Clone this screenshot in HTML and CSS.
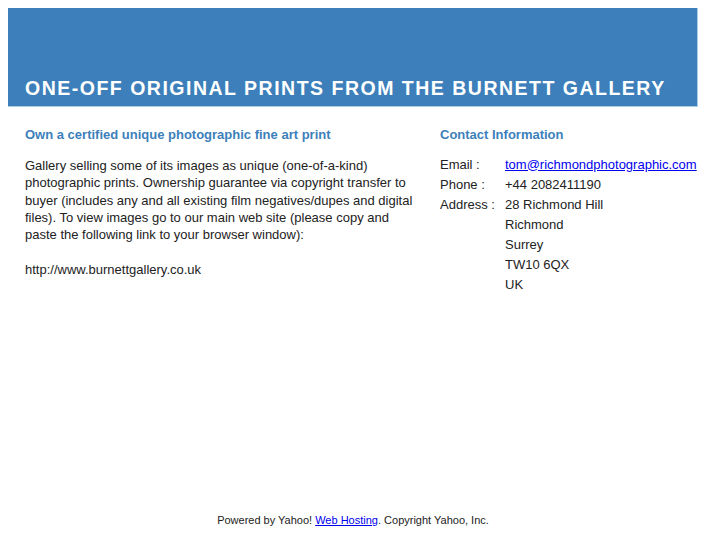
FILE: index.html
```html
<!DOCTYPE html>
<html>
<head>
<meta charset="utf-8">
<title>Burnett Gallery</title>
<link rel="stylesheet" href="styles.css">
</head>
<body>
<div class="page">
  <div class="header">
    <h1 class="title">ONE-OFF ORIGINAL PRINTS FROM THE BURNETT GALLERY</h1>
  </div>
  <div class="content">
    <div class="main">
      <h2 class="heading">Own a certified unique photographic fine art print</h2>
      <p class="text">Gallery selling some of its images as unique (one-of-a-kind) photographic prints. Ownership guarantee via copyright transfer to buyer (includes any and all existing film negatives/dupes and digital files). To view images go to our main web site (please copy and paste the following link to your browser window):<br><br>http://www.burnettgallery.co.uk</p>
    </div>
    <div class="side">
      <h2 class="heading side-heading">Contact Information</h2>
      <table class="contact">
        <tr><td class="label">Email :</td><td><a href="#" class="link">tom@richmondphotographic.com</a></td></tr>
        <tr><td class="label">Phone :</td><td>+44 2082411190</td></tr>
        <tr><td class="label">Address :</td><td>28 Richmond Hill</td></tr>
        <tr><td class="label"></td><td>Richmond</td></tr>
        <tr><td class="label"></td><td>Surrey</td></tr>
        <tr><td class="label"></td><td>TW10 6QX</td></tr>
        <tr><td class="label"></td><td>UK</td></tr>
      </table>
    </div>
  </div>
  <div class="footer">Powered by Yahoo! <a href="#" class="link">Web Hosting</a>. Copyright Yahoo, Inc.</div>
</div>
</body>
</html>
```
FILE: styles.css
```css
html, body {
  margin: 0;
  padding: 0;
}
body {
  padding: 8px;
  font-family: "Liberation Sans", Arial, sans-serif;
  color: #222;
  background: #fff;
}
.page {
  width: 690px;
  height: 529px;
  display: flex;
  flex-direction: column;
}
.header {
  background: #3d7fba;
  height: 98px;
  border-right: 1px solid #a9cbe6;
  border-bottom: 1px solid #a9cbe6;
  box-sizing: content-box;
  display: flex;
  align-items: flex-end;
  padding: 0 17px;
}
.title {
  margin: 0 0 6px 0;
  color: #fff;
  font-size: 19.5px;
  font-weight: bold;
  letter-spacing: 1.5px;
  white-space: nowrap;
}
.content {
  display: flex;
  padding: 20px 0 0 17px;
}
.main {
  width: 395px;
  margin-right: 20px;
}
.side {
  flex: 1;
}
.heading {
  margin: 0 0 14px 0;
  font-size: 13px;
  font-weight: bold;
  color: #3d7fba;
  line-height: 16px;
}
.side-heading {
  margin-bottom: 11px;
}
.text {
  margin: 0;
  font-size: 13px;
  line-height: 17.3px;
}
.contact {
  border-collapse: collapse;
  font-size: 13px;
}
.contact td {
  padding: 0;
  height: 20px;
  vertical-align: middle;
  white-space: nowrap;
}
.contact .label {
  width: 65px;
}
.link {
  color: #0000ee;
  text-decoration: underline;
}
.footer {
  margin-top: auto;
  text-align: center;
  font-size: 11px;
  line-height: 13px;
  padding-bottom: 10px;
}
```
